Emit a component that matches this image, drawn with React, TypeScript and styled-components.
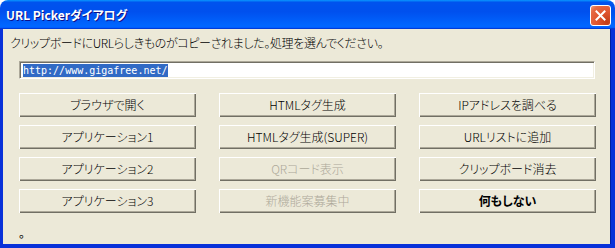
import React from 'react';
import styled, { createGlobalStyle } from 'styled-components';

const GlobalStyle = createGlobalStyle`
  html, body {
    margin: 0;
    padding: 0;
    background: #ffffff;
  }
`;

const uiFont = `"Noto Sans CJK JP", "Liberation Sans", sans-serif`;

const Window = styled.div`
  width: 615px;
  height: 248px;
  display: flex;
  flex-direction: column;
  border-radius: 8px 8px 0 0;
  overflow: hidden;
  box-sizing: border-box;
  font-family: ${uiFont};
`;

const TitleBar = styled.div`
  height: 29px;
  flex: none;
  display: flex;
  align-items: center;
  justify-content: space-between;
  padding: 0 4px 0 6px;
  background: linear-gradient(
    180deg,
    #0997ff,
    #0053ee 8%,
    #0050ee 40%,
    #0066ff 88%,
    #0066ff 93%,
    #005bff 95%,
    #003dd7 96%,
    #003dd7
  );
`;

const Title = styled.span`
  color: #ffffff;
  font-size: 12px;
  font-weight: bold;
  font-feature-settings: 'palt';
  text-shadow: 1px 1px #0f1089;
`;

const CloseButton = styled.div`
  width: 21px;
  height: 21px;
  margin-top: 1px;
  box-sizing: border-box;
  border: 1px solid #ffffff;
  border-radius: 3px;
  background: radial-gradient(circle at 85% 85%, #c23d17 0%, #e0552f 45%, #e56a44 80%, #f0a080 100%);
  display: flex;
  align-items: center;
  justify-content: center;
`;

const Frame = styled.div`
  flex: 1;
  display: flex;
  flex-direction: column;
  background: #ece9d8;
  border-left: 3px solid #0831d9;
  border-right: 4px solid #0831d9;
  border-bottom: 4px solid #0831d9;
  box-shadow: inset -1px 0 #001ea0;
`;

const Message = styled.div`
  margin: 7px 0 0 7px;
  font-size: 12px;
  line-height: 14px;
  letter-spacing: -0.35px;
  color: #000000;
  font-weight: 300;
  font-feature-settings: 'palt';
`;

const Edit = styled.div`
  margin: 11px 0 0 16px;
  width: 576px;
  height: 18px;
  box-sizing: border-box;
  background: #ffffff;
  border-top: 1px solid #aca899;
  border-left: 1px solid #aca899;
  border-right: 1px solid #ffffff;
  border-bottom: 1px solid #ffffff;
  box-shadow: inset 1px 1px #716f64, inset -1px -1px #f1efe2;
  padding: 2px 0 0 3px;
  display: flex;
  align-items: flex-start;
`;

const Selected = styled.span`
  background: #316ac5;
  color: #ffffff;
  font-family: "DejaVu Sans Mono", "Liberation Mono", monospace;
  font-size: 10px;
  line-height: 13px;
  white-space: pre;
`;

const ButtonGrid = styled.div`
  margin: 14px 0 0 16px;
  display: grid;
  grid-template-columns: repeat(3, 177px);
  grid-auto-rows: 24px;
  column-gap: 23px;
  row-gap: 8px;
`;

const Button = styled.div<{ $disabled?: boolean; $bold?: boolean }>`
  display: flex;
  align-items: center;
  justify-content: center;
  background: #ece9d8;
  font-size: 12px;
  font-feature-settings: 'palt';
  font-weight: ${(p) => (p.$bold ? 'bold' : 300)};
  color: ${(p) => (p.$disabled ? '#aca899' : '#000000')};
  box-shadow: inset 1px 1px #ffffff, inset -1px -1px #716f64, inset -2px -2px #aca899;
  padding-bottom: 1px;
  box-sizing: border-box;
`;

const Status = styled.div`
  margin: 13px 0 0 16px;
  font-size: 12px;
  line-height: 14px;
  color: #000000;
`;

const buttons: { label: string; disabled?: boolean; bold?: boolean }[] = [
  { label: 'ブラウザで開く' },
  { label: 'HTMLタグ生成' },
  { label: 'IPアドレスを調べる' },
  { label: 'アプリケーション1' },
  { label: 'HTMLタグ生成(SUPER)' },
  { label: 'URLリストに追加' },
  { label: 'アプリケーション2' },
  { label: 'QRコード表示', disabled: true },
  { label: 'クリップボード消去' },
  { label: 'アプリケーション3' },
  { label: '新機能案募集中', disabled: true },
  { label: '何もしない', bold: true },
];

const App: React.FC = () => {
  return (
    <>
      <GlobalStyle />
      <Window>
        <TitleBar>
          <Title>URL Pickerダイアログ</Title>
          <CloseButton>
            <svg width="11" height="11" viewBox="0 0 11 11">
              <path d="M1.5 1.5 L9.5 9.5 M9.5 1.5 L1.5 9.5" stroke="#ffffff" strokeWidth="2" strokeLinecap="square" />
            </svg>
          </CloseButton>
        </TitleBar>
        <Frame>
          <Message>クリップボードにURLらしきものがコピーされました。処理を選んでください。</Message>
          <Edit>
            <Selected>http://www.gigafree.net/</Selected>
          </Edit>
          <ButtonGrid>
            {buttons.map((b) => (
              <Button key={b.label} $disabled={b.disabled} $bold={b.bold}>
                {b.label}
              </Button>
            ))}
          </ButtonGrid>
          <Status>。</Status>
        </Frame>
      </Window>
    </>
  );
};

export default App;
